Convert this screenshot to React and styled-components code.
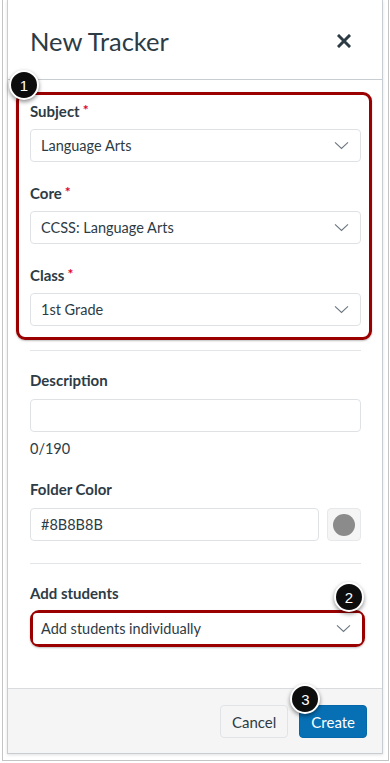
import styled, { createGlobalStyle } from 'styled-components';

const GlobalStyle = createGlobalStyle`
  body {
    margin: 0;
    background: #fff;
    font-family: Lato, "Noto Sans", sans-serif;
    color: #2d3b45;
  }
  * { box-sizing: border-box; }
`;

const Chevron = () => (
  <svg width='15' height='9' viewBox='0 0 15 9'>
    <path d='M1 1.3 L7.5 7.5 L14 1.3' fill='none' stroke='#6b7780' strokeWidth='1.1' />
  </svg>
);

const CloseIcon = () => (
  <svg width='14' height='14' viewBox='0 0 14 14'>
    <path d='M2 2 L12 12 M12 2 L2 12' stroke='#2d3b45' strokeWidth='3' strokeLinecap='square' />
  </svg>
);

function Select({ value, bare }) {
  return (
    <SelectBox bare={bare}>
      <span>{value}</span>
      <Chevron />
    </SelectBox>
  );
}

function Field({ label, required, value, first }) {
  return (
    <FieldBlock first={first}>
      <Label>
        {label}
        {required && <Req>*</Req>}
      </Label>
      <Select value={value} />
    </FieldBlock>
  );
}

export default function App() {
  return (
    <>
      <GlobalStyle />
      <Frame>
        <Panel>
          <Header>
            <Title>New Tracker</Title>
            <CloseIcon />
          </Header>
          <Body>
            <Highlight>
              <Badge top='-25px' left='-10px'>1</Badge>
              <Field first label='Subject' required value='Language Arts' />
              <Field label='Core' required value='CCSS: Language Arts' />
              <Field label='Class' required value='1st Grade' />
            </Highlight>
            <Divider top='10px' />
            <Label top='19px' gap='9px'>Description</Label>
            <TextInput />
            <Counter>0/190</Counter>
            <Label top='20px' gap='9px'>Folder Color</Label>
            <ColorRow>
              <TextInput>#8B8B8B</TextInput>
              <Swatch>
                <Dot color='#8b8b8b' />
              </Swatch>
            </ColorRow>
            <Divider top='22px' />
            <Label top='19px'>Add students</Label>
            <SelectHighlight>
              <Badge top='-31px' right='-2px'>2</Badge>
              <Select bare value='Add students individually' />
            </SelectHighlight>
          </Body>
          <Footer>
            <Button>Cancel</Button>
            <Button primary>
              <Badge top='-22px' left='-10px'>3</Badge>
              Create
            </Button>
          </Footer>
        </Panel>
      </Frame>
    </>
  );
}

const Frame = styled.div`
  margin-left: 2px;
  width: 387px;
  height: 761px;
  border: 1px solid #c4c4c4;
  border-top: none;
  padding: 0 5px 0 4px;
`;

const Panel = styled.div`
  height: 754px;
  display: flex;
  flex-direction: column;
  border: 1px solid #c7cdd1;
  border-top: none;
  background: #fff;
  box-shadow: 0 1px 3px rgba(0, 0, 0, 0.12);
`;

const Header = styled.div`
  height: 80px;
  flex-shrink: 0;
  display: flex;
  align-items: center;
  justify-content: space-between;
  padding: 2px 31px 0 22px;
  border-bottom: 1px solid #c7cdd1;
`;

const Title = styled.h1`
  margin: 0;
  font-size: 25.5px;
  font-weight: 400;
  color: #2d3b45;
`;

const Body = styled.div`
  flex: 1;
  padding: 12px 21px 0 22px;
`;

const Highlight = styled.div`
  position: relative;
  margin: 0 -11px 0 -14px;
  padding: 6px 8px 11px 11px;
  border: 3px solid #9a0000;
  border-radius: 9px;
  box-shadow: 0 1px 2px rgba(0, 0, 0, 0.25);
`;

const FieldBlock = styled.div`
  margin-top: ${({ first }) => (first ? '0' : '21px')};
`;

const Label = styled.div`
  margin-top: ${({ top }) => top || '0'};
  margin-bottom: ${({ gap }) => gap || '8px'};
  font-size: 15px;
  line-height: 20px;
  height: 20px;
  font-weight: 700;
  color: #2d3b45;
`;

const Req = styled.span`
  position: relative;
  top: -2px;
  line-height: 0;
  color: #e0061f;
  font-size: 14px;
  margin-left: 3px;
`;

const SelectBox = styled.div`
  height: ${({ bare }) => (bare ? '31px' : '33px')};
  display: flex;
  align-items: center;
  justify-content: space-between;
  padding: ${({ bare }) => (bare ? '0 11px 0 8px' : '0 11px 0 10px')};
  border: ${({ bare }) => (bare ? 'none' : '1px solid #dfe2e4')};
  border-radius: 4px;
  background: #fff;
  font-size: 14.5px;
  color: #2d3b45;
`;

const Divider = styled.hr`
  margin: ${({ top }) => top} 0 0;
  border: none;
  border-top: 1px solid #e3e5e7;
`;

const TextInput = styled.div`
  flex: 1;
  height: 33px;
  display: flex;
  align-items: center;
  padding: 0 10px;
  border: 1px solid #dfe2e4;
  border-radius: 4px;
  font-size: 14.5px;
  color: #2d3b45;
`;

const Counter = styled.div`
  margin-top: 7px;
  font-size: 14.5px;
  line-height: 20px;
`;

const ColorRow = styled.div`
  display: flex;
  gap: 8px;
`;

const Swatch = styled.div`
  width: 34px;
  height: 33px;
  display: flex;
  align-items: center;
  justify-content: center;
  background: #f5f5f5;
  border: 1px solid #e6e8ea;
  border-radius: 4px;
`;

const Dot = styled.div`
  width: 22px;
  height: 22px;
  border-radius: 50%;
  background: ${({ color }) => color};
`;

const SelectHighlight = styled.div`
  position: relative;
  margin-right: -4px;
  margin-top: -1px;
  border: 3px solid #9a0000;
  border-radius: 9px;
  box-shadow: 0 1px 2px rgba(0, 0, 0, 0.25);
`;

const Footer = styled.div`
  flex-shrink: 0;
  display: flex;
  justify-content: flex-end;
  gap: 11px;
  padding: 16px 15px 15px;
  background: #f5f5f5;
  border-top: 1px solid #d8dcdf;
`;

const Button = styled.div`
  position: relative;
  height: 33px;
  display: flex;
  align-items: center;
  padding: 0 11px;
  border-radius: 4px;
  font-size: 15px;
  background: ${({ primary }) => (primary ? '#0770b5' : '#f5f5f5')};
  color: ${({ primary }) => (primary ? '#fff' : '#2d3b45')};
  border: 1px solid ${({ primary }) => (primary ? '#0668a8' : '#e1e4e6')};
`;

const Badge = styled.div`
  position: absolute;
  top: ${({ top }) => top};
  left: ${({ left }) => left || 'auto'};
  right: ${({ right }) => right || 'auto'};
  width: 30px;
  height: 30px;
  border-radius: 50%;
  background: #0d0d0d;
  border: 2px solid #fff;
  box-shadow: 0 2px 4px rgba(0, 0, 0, 0.45);
  display: flex;
  align-items: center;
  justify-content: center;
  color: #fff;
  font-family: 'Liberation Sans', Arial, sans-serif;
  font-size: 15px;
  z-index: 2;
`;
